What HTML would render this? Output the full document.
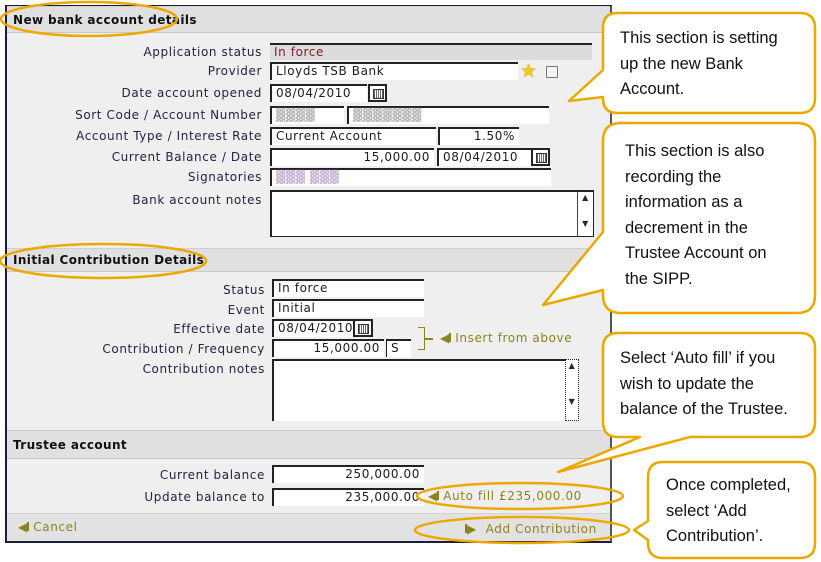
<!DOCTYPE html>
<html><head><meta charset="utf-8">
<style>
*{margin:0;padding:0;box-sizing:border-box}
body{width:821px;height:562px;background:#fff;position:relative;overflow:hidden;font-family:"DejaVu Sans",Verdana,sans-serif;font-size:12px;letter-spacing:0.6px;color:#2a2040}
.a{position:absolute;white-space:nowrap}
#panel{position:absolute;left:5px;top:5px;width:607px;height:538px;background:#efefef;border:2px solid #1c1c3c;border-right-color:#555;}
.hd{position:absolute;left:7px;width:603px;background:#e0e0e0;border-top:1px solid #cfcfcf;border-bottom:1px solid #c8c8c8;font-weight:bold;color:#111;font-size:12px;letter-spacing:0.4px;padding-left:6px}
.lb{position:absolute;text-align:right;white-space:nowrap;line-height:16px}
.in{position:absolute;background:#fff;border-top:2px solid #222;border-left:2px solid #222;height:18px;line-height:15px;padding:0 4px;white-space:nowrap;color:#1a1a2a}
.r{text-align:right}
.cal{position:absolute;width:19px;height:18px;border:2px solid #222;background:#fff}
.cal:after{content:"";position:absolute;left:3px;top:3px;width:9px;height:8px;border:1px solid #333;background:repeating-linear-gradient(90deg,#666 0 1px,#fff 1px 2px)}
.ol{color:#8a8420}
.co{font-family:"Liberation Sans",Carlito,sans-serif;font-size:16.5px;line-height:25.5px;color:#111;letter-spacing:0}
</style></head><body>
<div id="panel"></div>
<div class="hd" style="top:6px;height:27px;line-height:26px">New bank account details</div>
<div class="lb" style="left:40px;width:222px;top:44px">Application status</div>
<div class="a" style="left:270px;top:43px;width:322px;height:17px;background:#dcdcdc;border-top:2px solid #222;color:#8a1a2a;padding-left:4px;line-height:15px">In force</div>
<div class="lb" style="left:40px;width:222px;top:63px">Provider</div>
<div class="in" style="left:270px;top:62px;width:248px">Lloyds TSB Bank</div>
<div class="a" style="left:520px;top:60px;font-size:19px;color:#f2c818;line-height:22px;text-shadow:0 0 1px #a08000">★</div>
<div class="a" style="left:546px;top:66px;width:12px;height:12px;border:1px solid #777;background:#f4f4f4"></div>
<div class="lb" style="left:40px;width:222px;top:85px">Date account opened</div>
<div class="in" style="left:270px;top:84px;width:97px">08/04/2010</div>
<div class="cal" style="left:368px;top:84px"></div>
<div class="lb" style="left:40px;width:222px;top:107px">Sort Code / Account Number</div>
<div class="in" style="left:270px;top:106px;width:74px;color:#bbb">▓▓▓▓</div>
<div class="in" style="left:347px;top:106px;width:202px;color:#bbb">▓▓▓▓▓▓▓</div>
<div class="lb" style="left:40px;width:222px;top:128px">Account Type / Interest Rate</div>
<div class="in" style="left:270px;top:127px;width:166px">Current Account</div>
<div class="in r" style="left:438px;top:127px;width:81px">1.50%</div>
<div class="lb" style="left:40px;width:222px;top:149px">Current Balance / Date</div>
<div class="in r" style="left:270px;top:148px;width:164px">15,000.00</div>
<div class="in" style="left:437px;top:148px;width:94px">08/04/2010</div>
<div class="cal" style="left:531px;top:148px"></div>
<div class="lb" style="left:40px;width:222px;top:169px">Signatories</div>
<div class="in" style="left:270px;top:168px;width:281px;color:#c8b8d8">▓▓▓ ▓▓▓</div>
<div class="lb" style="left:40px;width:222px;top:192px">Bank account notes</div>
<div class="a" style="left:270px;top:190px;width:324px;height:47px;background:#fff;border:1px solid #222;border-top-width:2px;border-left-width:2px"></div>
<div class="a" style="left:577px;top:191px;width:16px;height:45px;border-left:1px solid #444;font-size:8px;text-align:center;line-height:13px">▲<br><br>▼</div>

<div class="hd" style="top:248px;height:24px;line-height:22px">Initial Contribution Details</div>
<div class="lb" style="left:20px;width:245px;top:282px">Status</div>
<div class="in" style="left:272px;top:279px;width:152px">In force</div>
<div class="lb" style="left:20px;width:245px;top:302px">Event</div>
<div class="in" style="left:272px;top:299px;width:152px">Initial</div>
<div class="lb" style="left:20px;width:245px;top:321px">Effective date</div>
<div class="in" style="left:272px;top:319px;width:81px">08/04/2010</div>
<div class="cal" style="left:353px;top:319px;width:20px"></div>
<div class="lb" style="left:20px;width:245px;top:341px">Contribution / Frequency</div>
<div class="in r" style="left:272px;top:339px;width:112px">15,000.00</div>
<div class="in" style="left:386px;top:339px;width:25px;border-left:1px solid #222">S</div>
<div class="a" style="left:418px;top:327px;width:7px;height:23px;border:1.5px solid #8a8420;border-left:none"></div>
<div class="a" style="left:425px;top:338px;width:8px;height:1.5px;background:#8a8420"></div>
<div class="a ol" style="left:440px;top:331px">◀<span style="display:inline-block;width:2px;height:9px;background:#8a8420;margin-left:-1px"></span> Insert from above</div>
<div class="lb" style="left:20px;width:245px;top:361px">Contribution notes</div>
<div class="a" style="left:272px;top:359px;width:294px;height:62px;background:#fff;border-top:2px solid #222;border-left:2px solid #222"></div>
<div class="a" style="left:565px;top:359px;width:14px;height:62px;border:1px dotted #222;background:#fff;font-size:8px;text-align:center;line-height:12px">▲<br><br><br>▼</div>

<div class="hd" style="top:430px;height:29px;line-height:28px">Trustee account</div>
<div class="lb" style="left:20px;width:245px;top:467px">Current balance</div>
<div class="in r" style="left:272px;top:465px;width:152px">250,000.00</div>
<div class="lb" style="left:20px;width:245px;top:489px">Update balance to</div>
<div class="in r" style="left:272px;top:488px;width:152px">235,000.00</div>
<div class="a ol" style="left:428px;top:489px">◀<span style="display:inline-block;width:2px;height:9px;background:#8a8420;margin-left:-1px"></span> Auto fill £235,000.00</div>

<div class="a" style="left:7px;top:513px;width:603px;height:28px;background:#e2e2e2;border-top:1px solid #cfcfcf"></div>
<div class="a ol" style="left:18px;top:520px">◀<span style="display:inline-block;width:2px;height:9px;background:#8a8420;margin-left:-1px"></span> Cancel</div>
<div class="a ol" style="left:465px;top:522px"><span style="display:inline-block;width:2px;height:9px;background:#8a8420"></span>▶&nbsp; Add Contribution</div>

<svg class="a" style="left:0;top:0" width="821" height="562">
<g fill="none" stroke="#eda800" stroke-width="2.5">
<ellipse cx="89" cy="19" rx="88" ry="17"/>
<ellipse cx="103" cy="261" rx="103" ry="17"/>
<ellipse cx="520" cy="496" rx="103" ry="13"/>
<ellipse cx="522" cy="530" rx="107" ry="13"/>
</g>
<g fill="#fff" stroke="#eda800" stroke-width="2.5" stroke-linejoin="round">
<path d="M617 13 H800 Q815 13 815 28 V98 Q815 113 800 113 H617 Q603 113 603 98 V97 L569 101 L603 70 V28 Q603 13 617 13 Z"/>
<path d="M621 123 H797 Q815 123 815 141 V295 Q815 313 797 313 H621 Q603 313 603 295 V290 L543 305 L603 232 V141 Q603 123 621 123 Z"/>
<path d="M618 333 H800 Q815 333 815 348 V422 Q815 437 800 437 H690 L558 472 L640 437 H618 Q603 437 603 422 V348 Q603 333 618 333 Z"/>
<path d="M663 462 H800 Q815 462 815 477 V543 Q815 558 800 558 H663 Q648 558 648 543 V540 L634 530 L648 521 V477 Q648 462 663 462 Z"/>
</g>
</svg>
<div class="a co" style="left:620px;top:26px">This section is setting<br>up the new Bank<br>Account.</div>
<div class="a co" style="left:625px;top:139px">This section is also<br>recording the<br>information as a<br>decrement in the<br>Trustee Account on<br>the SIPP.</div>
<div class="a co" style="left:620px;top:346px">Select ‘Auto fill’ if you<br>wish to update the<br>balance of the Trustee.</div>
<div class="a co" style="left:666px;top:473px">Once completed,<br>select ‘Add<br>Contribution’.</div>
</body></html>
